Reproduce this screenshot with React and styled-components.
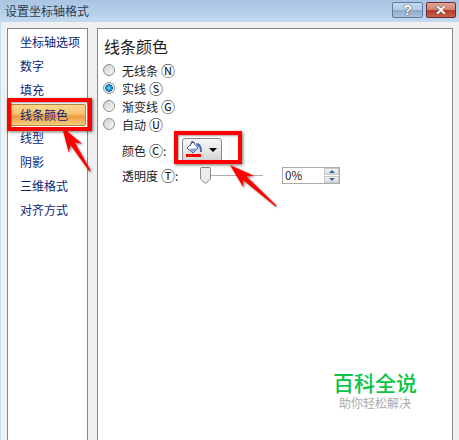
import React from 'react';
import styled, { createGlobalStyle } from 'styled-components';

const GlobalStyle = createGlobalStyle`
  html, body {
    margin: 0;
    padding: 0;
    background: #f0f0f0;
  }
  body {
    font-family: "Noto Sans CJK SC", "Liberation Sans", sans-serif;
    font-size: 12px;
    color: #222;
  }
`;

const Dialog = styled.div`
  position: relative;
  width: 459px;
  height: 440px;
  overflow: hidden;
  display: flex;
  flex-direction: column;
`;

const TitleBar = styled.div`
  height: 22px;
  flex: none;
  display: flex;
  align-items: center;
  justify-content: space-between;
  padding: 0 3px 0 5px;
  background: linear-gradient(180deg, #a9c5e3 0%, #b6cfe9 55%, #c3d9ef 100%);
`;

const Title = styled.span`
  font-size: 12px;
  line-height: 22px;
  color: #2f3d4c;
`;

const WindowButtons = styled.div`
  display: flex;
  gap: 3px;
  margin-top: -2px;
`;

const WinButton = styled.div`
  width: ${(p) => (p.$close ? 30 : 31)}px;
  height: 16px;
  box-sizing: border-box;
  border-radius: 2px;
  border: 1px solid ${(p) => (p.$close ? '#6e2a2e' : '#5f7b9d')};
  display: flex;
  align-items: center;
  justify-content: center;
  font-family: "Liberation Sans", sans-serif;
  font-weight: 700;
  font-size: 14px;
  line-height: 14px;
  color: #fff;
  text-shadow: 0 0 1px #333, 0 0 1px #333;
  background: ${(p) =>
    p.$close
      ? 'linear-gradient(180deg, #e3a49a 0%, #d38072 48%, #b63a28 52%, #c8604c 100%)'
      : 'linear-gradient(180deg, #c6d9ee 0%, #b3cbe4 48%, #8eabcc 52%, #a9c2dd 100%)'};
`;

const Body = styled.div`
  flex: 1;
  min-height: 0;
  display: flex;
  gap: 9px;
  padding: 6px 6px 0 6px;
  border-left: 1px solid #c8dcf2;
`;

const Panel = styled.div`
  box-sizing: border-box;
  background: #fff;
  border: 1px solid #828790;
  border-bottom: none;
`;

const NavPanel = styled(Panel)`
  width: 81px;
  flex: none;
  padding: 2px 1px 0;
`;

const NavItem = styled.div`
  height: 24px;
  line-height: 22px;
  padding-left: 11px;
  font-size: 12px;
  color: #0c2478;
  box-sizing: border-box;
  ${(p) =>
    p.$active &&
    `
    border: 1px solid #b8893c;
    border-radius: 2px;
    height: 22px;
    margin: 1px 0;
    padding-left: 10px;
    line-height: 20px;
    background: linear-gradient(180deg, #fbd68c 0%, #f7c571 42%, #ee9a45 58%, #f8cf7e 100%);
  `}
`;

const ContentPanel = styled(Panel)`
  flex: 1;
  padding: 6px 5px 0;
`;

const Heading = styled.h2`
  margin: 0 0 4px 1px;
  font-size: 16px;
  line-height: 22px;
  font-weight: 400;
  color: #1d1d1d;
`;

const RadioRow = styled.div`
  display: flex;
  align-items: center;
  gap: 7px;
  height: 18px;
`;

const Radio = styled.span`
  width: 12px;
  height: 12px;
  box-sizing: border-box;
  border-radius: 50%;
  border: 1px solid #8e8f8f;
  background: ${(p) =>
    p.$checked
      ? 'radial-gradient(circle, #7fd4fb 0%, #1b8ed4 38%, #0a5f9e 50%, #eef1f4 56%, #e4e6e8 100%)'
      : 'linear-gradient(135deg, #cfcfcf 0%, #e6e6e6 55%, #fbfbfb 100%)'};
`;

const Label = styled.span`
  font-size: 12px;
  line-height: 16px;
  white-space: pre;
`;

const Mnemonic = styled.span`
  font-size: 14px;
  line-height: 16px;
  margin-left: 3px;
`;

const FieldRow = styled.div`
  display: flex;
  align-items: center;
  padding-left: 19px;
  height: ${(p) => p.$h || 24}px;
  margin-top: ${(p) => p.$mt || 0}px;
`;

const FieldLabel = styled(Label)`
  width: ${(p) => p.$w}px;
  flex: none;
`;

const ColorButton = styled.div`
  width: 40px;
  height: 24px;
  box-sizing: border-box;
  border: 1px solid #8a8a8a;
  border-radius: 3px;
  background: linear-gradient(180deg, #f6f6f6 0%, #e8e8e8 50%, #d4d4d4 100%);
  display: flex;
  align-items: center;
  padding-left: 3px;
  gap: 3px;
`;

const Caret = styled.span`
  width: 0;
  height: 0;
  border-left: 4px solid transparent;
  border-right: 4px solid transparent;
  border-top: 4px solid #000;
`;

const SliderTrack = styled.div`
  position: relative;
  width: 63px;
  height: 1px;
  background: #b0b0b0;
`;

const SliderThumb = styled.svg`
  position: absolute;
  left: 0;
  top: -8px;
`;

const SpinBox = styled.div`
  width: 58px;
  height: 17px;
  margin-left: 19px;
  box-sizing: border-box;
  border: 1px solid #ababab;
  display: flex;
  justify-content: space-between;
  background: #fff;
`;

const SpinValue = styled.span`
  padding-left: 2px;
  font-size: 11.5px;
  line-height: 15px;
`;

const SpinButtons = styled.div`
  width: 15px;
  display: flex;
  flex-direction: column;
  gap: 1px;
`;

const SpinButton = styled.div`
  flex: 1;
  display: flex;
  align-items: center;
  justify-content: center;
  background: linear-gradient(180deg, #f4f4f4, #dcdcdc);
  border: 1px solid #c6c6c6;
  box-sizing: border-box;
  &::after {
    content: '';
    width: 0;
    height: 0;
    border-left: 3px solid transparent;
    border-right: 3px solid transparent;
    ${(p) => (p.$up ? 'border-bottom' : 'border-top')}: 3px solid #3f5f9a;
  }
`;

const RedBox = styled.div`
  position: absolute;
  box-sizing: border-box;
  left: ${(p) => p.$x}px;
  top: ${(p) => p.$y}px;
  width: ${(p) => p.$w}px;
  height: ${(p) => p.$h}px;
  border: 4px solid #f00;
  box-shadow: 1px 1px 3px rgba(0, 0, 0, 0.55), inset 1px 1px 2px rgba(0, 0, 0, 0.35);
`;

const ArrowLayer = styled.svg`
  position: absolute;
  left: 0;
  top: 0;
  pointer-events: none;
`;

const Watermark = styled.div`
  position: absolute;
  right: 42px;
  top: 370px;
  width: 84px;
  text-align: center;
`;

const WatermarkName = styled.div`
  font-size: 21px;
  line-height: 24px;
  font-weight: 500;
  color: #0bc545;
  white-space: nowrap;
`;

const WatermarkTag = styled.div`
  margin-top: 1px;
  font-size: 12px;
  line-height: 15px;
  color: #aaa;
  white-space: nowrap;
`;

const navItems = ['坐标轴选项', '数字', '填充', '线条颜色', '线型', '阴影', '三维格式', '对齐方式'];

const lineOptions = [
  { label: '无线条', key: 'Ⓝ' },
  { label: '实线', key: 'Ⓢ', checked: true },
  { label: '渐变线', key: 'Ⓖ' },
  { label: '自动', key: 'Ⓤ' },
];

const PaintBucket = () => (
  <svg width="20" height="20" viewBox="0 0 20 20">
    <path d="M1 8 L7 2 L12 8 L7 13 Z" fill="#fdfdfd" stroke="#4a5a78" strokeWidth="1" />
    <path d="M4 6 L6 1 L9 3" fill="none" stroke="#4a5a78" strokeWidth="1" />
    <path d="M3 9 L11 8 L7 12 Z" fill="#7ea2d8" />
    <path d="M10 3 C14 3 16 6 16 12 L14 12 C14 8 13 6 11 6 Z" fill="#3f6fc0" />
    <rect x="0" y="14" width="15" height="3" fill="#f00" />
  </svg>
);

const Arrow = ({ tip, tail }) => {
  // shaft plus a barbed head, pointing from tail to tip
  const dx = tip[0] - tail[0];
  const dy = tip[1] - tail[1];
  const len = Math.hypot(dx, dy);
  const ux = dx / len;
  const uy = dy / len;
  const at = (along, side) => `${tip[0] - ux * along - uy * side},${tip[1] - uy * along + ux * side}`;
  const points = [
    at(0, 0), at(25, 8), at(20, 2.5), at(len, 0.7), at(len, -0.7), at(20, -2.5), at(25, -8),
  ].join(' ');
  return <polygon points={points} fill="#f00" filter="url(#arrowShadow)" />;
};

export default function App() {
  return (
    <Dialog>
      <GlobalStyle />
      <TitleBar>
        <Title>设置坐标轴格式</Title>
        <WindowButtons>
          <WinButton>?</WinButton>
          <WinButton $close>✕</WinButton>
        </WindowButtons>
      </TitleBar>
      <Body>
        <NavPanel>
          {navItems.map((item) => (
            <NavItem key={item} $active={item === '线条颜色'}>{item}</NavItem>
          ))}
        </NavPanel>
        <ContentPanel>
          <Heading>线条颜色</Heading>
          {lineOptions.map((opt) => (
            <RadioRow key={opt.label}>
              <Radio $checked={opt.checked} />
              <Label>{opt.label}<Mnemonic>{opt.key}</Mnemonic></Label>
            </RadioRow>
          ))}
          <FieldRow $mt={4} $h={26}>
            <FieldLabel $w={60}>颜色<Mnemonic>Ⓒ</Mnemonic>:</FieldLabel>
            <ColorButton>
              <PaintBucket />
              <Caret />
            </ColorButton>
          </FieldRow>
          <FieldRow>
            <FieldLabel $w={78}>透明度<Mnemonic>Ⓣ</Mnemonic>:</FieldLabel>
            <SliderTrack>
              <SliderThumb width="11" height="17" viewBox="0 0 11 17">
                <path d="M0.5 1.5 Q0.5 0.5 1.5 0.5 H9.5 Q10.5 0.5 10.5 1.5 V12 L5.5 16.5 L0.5 12 Z" fill="#ececec" stroke="#8a8a8a" />
              </SliderThumb>
            </SliderTrack>
            <SpinBox>
              <SpinValue>0%</SpinValue>
              <SpinButtons>
                <SpinButton $up />
                <SpinButton />
              </SpinButtons>
            </SpinBox>
          </FieldRow>
        </ContentPanel>
      </Body>
      <RedBox $x={7} $y={98} $w={85} $h={33} />
      <RedBox $x={174} $y={131} $w={68} $h={33} />
      <ArrowLayer width="459" height="440">
        <defs>
          <filter id="arrowShadow" x="-30%" y="-30%" width="160%" height="160%">
            <feDropShadow dx="1" dy="1" stdDeviation="1" floodColor="#000" floodOpacity="0.5" />
          </filter>
        </defs>
        <Arrow tip={[62, 127]} tail={[90, 171]} />
        <Arrow tip={[230, 165]} tail={[276, 206]} />
      </ArrowLayer>
      <Watermark>
        <WatermarkName>百科全说</WatermarkName>
        <WatermarkTag>助你轻松解决</WatermarkTag>
      </Watermark>
    </Dialog>
  );
}
